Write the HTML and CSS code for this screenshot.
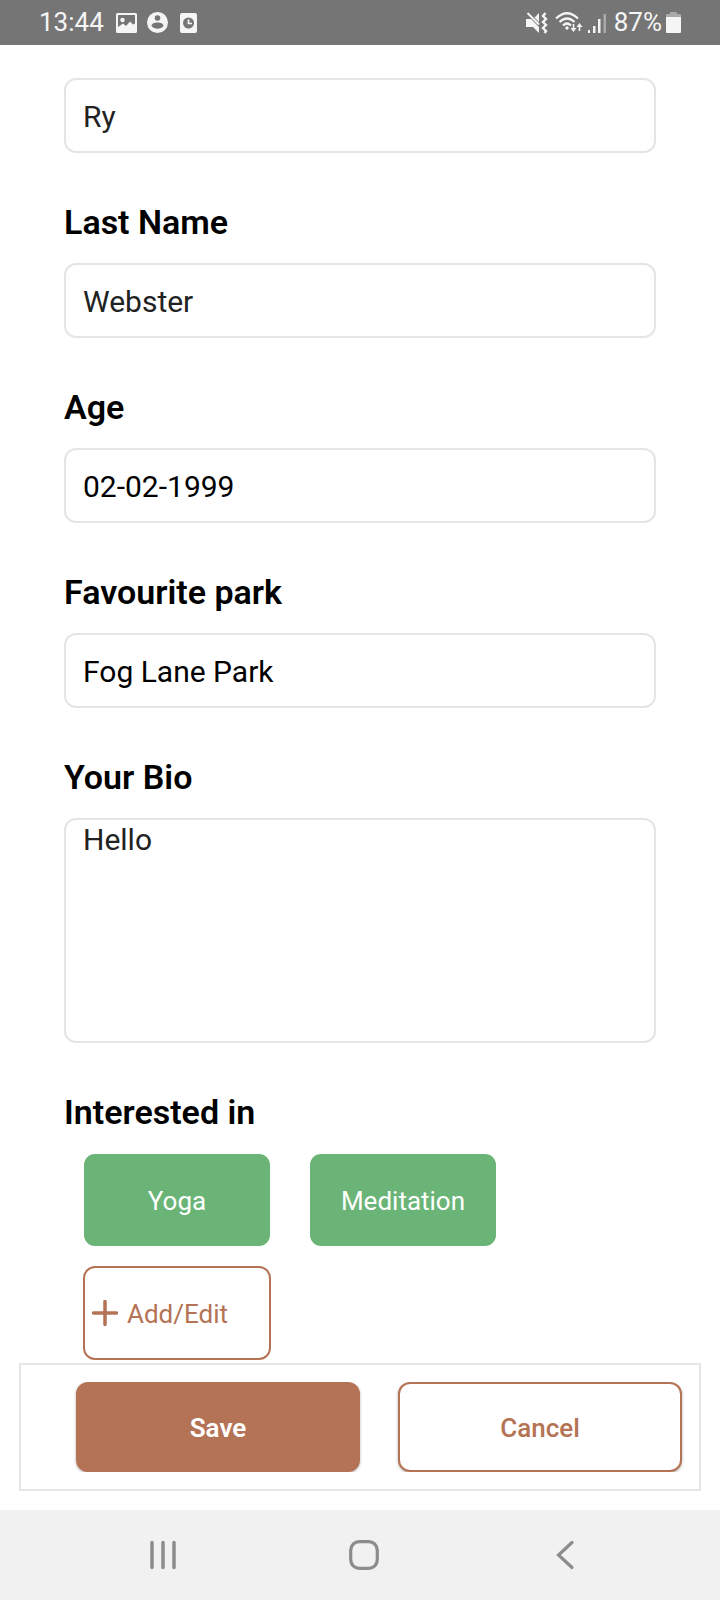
FILE: index.html
```html
<!DOCTYPE html>
<html lang="en">
<head>
  <meta charset="UTF-8">
  <meta name="viewport" content="width=device-width, initial-scale=1">
  <title>Edit profile</title>
  <link rel="stylesheet" href="styles.css">
</head>
<body>
  <header class="status">
    <span class="clock">13:44</span>
    <!--notifications-->
    <svg class="notice" width="21" height="20" viewBox="0 0 21 20">
      <path fill="#f5f5f5" fill-rule="evenodd" d="M1.500 0h18a1.500 1.500 0 0 1 1.500 1.500v17a1.500 1.500 0 0 1-1.500 1.500h-18A1.500 1.500 0 0 1 0 18.500v-17A1.500 1.500 0 0 1 1.500 0zM2 2v12l5-3.500 3 2.500 4-4.500 3 3 2-1V2z"/>
      <circle cx="6.500" cy="7" r="2.200" fill="#f5f5f5"/>
    </svg>
    <svg class="notice" width="21" height="21" viewBox="0 0 21 21">
      <circle cx="10.500" cy="10.500" r="10.500" fill="#f5f5f5"/>
      <circle cx="10.500" cy="6" r="2.800" fill="#757575"/>
      <path fill="#757575" d="M4.500 14c0-2.500 3-3.500 6-3.500s6 1 6 3.500c-1.500 1.900-3.500 2.700-6 2.700s-4.500-.8-6-2.700z"/>
    </svg>
    <svg class="notice last" width="17" height="20" viewBox="0 0 17 20">
      <rect width="17" height="20" rx="2" fill="#f5f5f5"/>
      <circle cx="8.500" cy="10" r="5.500" fill="#757575"/>
      <path d="M8.500 6.500V10.500H12" fill="none" stroke="#f5f5f5" stroke-width="1.700"/>
    </svg>
    <!--mute, wifi, signal-->
    <svg class="mute" width="22" height="22" viewBox="0 0 22 22">
      <path fill="#f5f5f5" d="M0 7h5l8 8v6l-6-6H0zM8.500 5.500L13 1v9z"/>
      <path d="M1.500 1l11.500 11.500" stroke="#f5f5f5" stroke-width="2"/>
      <path d="M19.500 1l-2.500 3 3 3-3 3 3 3-3 3 3 3-1.500 2" fill="none" stroke="#f5f5f5" stroke-width="2.400"/>
    </svg>
    <svg class="wifi" width="28" height="21" viewBox="0 0 28 21">
      <g fill="none" stroke="#f5f5f5" stroke-width="2.200">
        <path d="M1 6.500Q12 -4 23 6.500"/>
        <path d="M4.500 10Q12 3 19.500 10"/>
        <path d="M8 13.500Q12 9.500 16 13.500"/>
      </g>
      <circle cx="12" cy="16" r="1.700" fill="#f5f5f5"/>
      <path d="M18.500 12v6M24.500 19v-6" stroke="#f5f5f5" stroke-width="1.600"/>
      <path fill="#f5f5f5" d="M15.500 16h6l-3 4zM21.500 15h6l-3-4z"/>
    </svg>
    <svg class="signal" width="18" height="20" viewBox="0 0 18 20">
      <path fill="#f5f5f5" d="M0 17h2v3H0zM5 13h2.500v7H5zM10 6h2.500v14H10z"/>
      <path fill="#aaa" d="M15.500 1H18v19h-2.500z"/>
    </svg>
    <span class="percent">87%</span>
    <svg class="battery" width="15" height="21" viewBox="0 0 15 21">
      <path fill="#aaa" d="M4 0h7v2h3a1 1 0 0 1 1 1v2H0V3a1 1 0 0 1 1-1h3z"/>
      <path fill="#f5f5f5" d="M0 5h15v15a1 1 0 0 1-1 1H1a1 1 0 0 1-1-1z"/>
    </svg>
  </header>

  <form class="profile">
    <div class="fields">
      <input class="field" type="text" aria-label="First Name" value="Ry">

      <label class="title" for="lastName">Last Name</label>
      <input class="field" id="lastName" type="text" value="Webster">

      <label class="title" for="age">Age</label>
      <input class="field picked" id="age" type="text" value="02-02-1999">

      <label class="title" for="park">Favourite park</label>
      <input class="field picked" id="park" type="text" value="Fog Lane Park">

      <label class="title" for="bio">Your Bio</label>
      <textarea class="field bio" id="bio">Hello</textarea>

      <h2 class="title">Interested in</h2>
      <div class="tags">
        <button class="tag" type="button">Yoga</button>
        <button class="tag" type="button">Meditation</button>
        <button class="tag add" type="button">
          <svg width="26" height="28" viewBox="0 0 26 28">
            <path d="M13 1.500v23M1.500 13h23" stroke="#b57355" stroke-width="3.500" stroke-linecap="round"/>
          </svg>
          Add/Edit
        </button>
      </div>
    </div>

    <div class="actions">
      <button class="btn save" type="submit">Save</button>
      <button class="btn cancel" type="button">Cancel</button>
    </div>
  </form>

  <!--system navigation-->
  <nav class="navbar">
    <button class="nav-btn" type="button" aria-label="Recent apps">
      <svg width="30" height="30" viewBox="0 0 30 30">
        <path d="M4 2.500v25M15 2.500v25M26 2.500v25" stroke="#8c8c8c" stroke-width="3.500" stroke-linecap="round"/>
      </svg>
    </button>
    <button class="nav-btn" type="button" aria-label="Home">
      <svg width="30" height="30" viewBox="0 0 30 30">
        <rect x="1.700" y="1.700" width="26.600" height="26.600" rx="8.500" fill="none" stroke="#8c8c8c" stroke-width="3.200"/>
      </svg>
    </button>
    <button class="nav-btn" type="button" aria-label="Back">
      <svg width="30" height="30" viewBox="0 0 30 30">
        <path d="M22 2.500L8.500 15 22 27.500" fill="none" stroke="#8c8c8c" stroke-width="3.200" stroke-linecap="round"/>
      </svg>
    </button>
  </nav>
</body>
</html>
```
FILE: styles.css
```css
*{
  margin: 0;
  padding: 0;
  box-sizing: border-box;
}
body{
  min-height: 100vh;
  display: flex;
  flex-direction: column;
  background: #fff;
  font-family: Roboto, "Liberation Sans", sans-serif;
}
button, input, textarea{
  font-family: inherit;
}
svg{
  flex: none;
}
/*status bar*/
.status{
  height: 45px;
  padding: 0 39px;
  display: flex;
  align-items: center;
  background: #757575;
  color: #f5f5f5;
  font-size: 26px;
  line-height: 47px;
}
.clock{
  margin-right: 2px;
}
.notice{
  margin-left: 10px;
}
.last{
  margin-left: 12px;
  margin-right: auto;
}
.wifi{
  margin-left: 7px;
}
.signal{
  margin-left: 5px;
}
.percent{
  margin-left: 8px;
}
.battery{
  margin-left: 4px;
}
/*form*/
.profile{
  flex: 1;
}
.fields{
  padding: 33px 64px 0;
}
.title{
  display: block;
  margin: 49px 0 21px;
  font-size: 34px;
  font-weight: 600;
  line-height: 40px;
  color: #000;
}
.field{
  display: block;
  width: 100%;
  height: 75px;
  padding: 2px 17px 0;
  border: 2px solid #e5e5e8;
  border-radius: 12px;
  background: #fff;
  font-size: 30px;
  line-height: 35px;
  color: #222;
  outline: none;
}
.picked{
  color: #000;
}
.bio{
  height: 225px;
  resize: none;
}
.tags{
  display: flex;
  flex-wrap: wrap;
  gap: 19px 38px;
  padding-left: 19px;
}
.tag{
  width: 188px;
  height: 94px;
  padding-top: 2px;
  border: 1px solid transparent;
  border-radius: 12px;
  background: #6ab478;
  background-clip: padding-box;
  color: #fff;
  font-size: 26px;
}
.add{
  display: flex;
  align-items: center;
  gap: 9px;
  padding-left: 7px;
  border: 2px solid #b57355;
  background: #fff;
  color: #b57355;
}
/*bottom buttons*/
.actions{
  display: flex;
  gap: 38px;
  margin: 3px 19px 19px;
  padding: 17px 17px 17px 55px;
  border: 2px solid #e5e5e8;
}
.btn{
  flex: 1;
  height: 90px;
  padding-top: 2px;
  border: 2px solid #b57355;
  border-radius: 12px;
  font-size: 26px;
  /*the shadow is only seen at the sides*/
  box-shadow: 0 1px 3px rgba(0, 0, 0, .3);
  clip-path: inset(0 -4px);
}
.save{
  background: #b57355;
  color: #fff;
  font-weight: 600;
}
.cancel{
  background: #fff;
  color: #b57355;
  font-weight: 500;
}
/*navigation bar*/
.navbar{
  height: 90px;
  display: flex;
  padding: 0 55px 0 63px;
  background: #f1f1f1;
}
.nav-btn{
  flex: 1;
  display: flex;
  align-items: center;
  justify-content: center;
  border: none;
  background: none;
}
```
